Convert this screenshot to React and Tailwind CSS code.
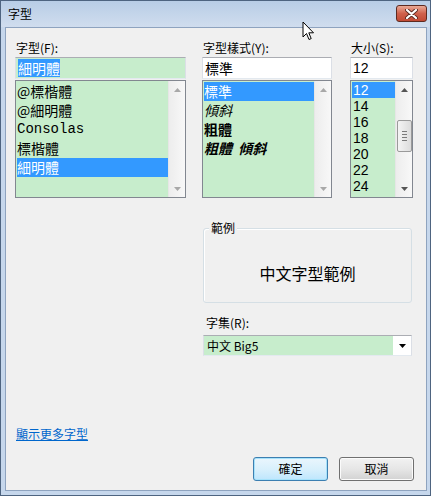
import React from 'react';

const fonts = ['@標楷體', '@細明體', 'Consolas', '標楷體', '細明體'];
const styles = [
  { label: '標準', cls: '' },
  { label: '傾斜', cls: 'italic' },
  { label: '粗體', cls: 'font-bold' },
  { label: '粗體  傾斜', cls: 'font-bold italic' },
];
const sizes = ['12', '14', '16', '18', '20', '22', '24'];

const Arrow = ({ down, color = '#a8a8a8' }) => (
  <svg width="7" height="4" viewBox="0 0 7 4">
    <path d={down ? 'M0 0 L7 0 L3.5 4Z' : 'M0 4 L3.5 0 L7 4Z'} fill={color} />
  </svg>
);

const ScrollBar = ({ thumb, color }) => (
  <div className="w-[17px] h-full flex flex-col bg-gradient-to-r from-[#ededed] to-[#f8f8f8] border-l border-[#e6e6e6]">
    <div className="h-[17px] flex items-center justify-center">
      <Arrow color={color} />
    </div>
    <div className="flex-1 flex flex-col items-center">
      {thumb && (
        <div className="mt-[22px] w-[15px] h-[32px] rounded-[2px] border border-[#9a9a9a] bg-gradient-to-r from-[#f4f4f4] to-[#dcdcdc] flex flex-col items-center justify-center gap-[2px]">
          <div className="w-[5px] h-px bg-[#7a7a7a]" />
          <div className="w-[5px] h-px bg-[#7a7a7a]" />
          <div className="w-[5px] h-px bg-[#7a7a7a]" />
          <div className="w-[5px] h-px bg-[#7a7a7a]" />
        </div>
      )}
    </div>
    <div className="h-[17px] flex items-center justify-center">
      <Arrow down color={color} />
    </div>
  </div>
);

const Label = ({ children }) => (
  <div className="h-[16px] leading-[16px] text-[12px] pl-[1px] text-black">{children}</div>
);

const Edit = ({ children, green }) => (
  <div
    className={`mt-[1px] h-[22px] border border-[#abadb3] border-b-[#e3e9ef] border-x-[#dbdfe6] flex items-center pl-[2px] text-[14px] leading-[18px] ${
      green ? 'bg-[#c7edcc]' : 'bg-white'
    }`}
  >
    {children}
  </div>
);

export default function App() {
  return (
    <div className="w-[431px] h-[496px] relative flex flex-col border border-[#4e6480] bg-[#c6d7ec] font-['Noto_Sans_CJK_TC','Noto_Sans',sans-serif] text-black select-none overflow-hidden">
      {/* title bar */}
      <div className="h-[26px] flex items-start justify-between pl-[7px] pr-[3px] bg-gradient-to-b from-[#b8cde6] to-[#d0ddee]">
        <span className="mt-[5px] text-[12px] leading-[16px]">字型</span>
        <div className="mt-[4px] w-[31px] h-[17px] rounded-[3px] border border-[#5e2a20] bg-gradient-to-b from-[#e9a996] via-[#d0614c] to-[#c14a34] flex items-center justify-center">
          <svg width="13" height="10" viewBox="0 0 13 10">
            <path d="M2 1 L11 9 M11 1 L2 9" stroke="#5a2a22" strokeWidth="4" strokeLinecap="round" />
            <path d="M2 1 L11 9 M11 1 L2 9" stroke="#ffffff" strokeWidth="2.2" strokeLinecap="round" />
          </svg>
        </div>
      </div>

      {/* client area */}
      <div className="flex-1 ml-[4px] mr-[3px] mb-[4px] border border-[#8ea3bf] bg-[#f0f0f0] flex flex-col pt-[12px]">
        <div className="flex pl-[9px] gap-[16px]">
          {/* font */}
          <div className="w-[171px] flex flex-col">
            <Label>字型(F):</Label>
            <Edit green>
              <span className="bg-[#3399ff] text-white">細明體</span>
            </Edit>
            <div className="mt-[1px] h-[118px] border border-[#828790] bg-[#c7edcc] flex">
              <div className="flex-1 pt-[1px] pl-[1px] flex flex-col">
                {fonts.map((f, i) => (
                  <div
                    key={i}
                    className={`h-[19px] leading-[19px] text-[14px] ${
                      f === 'Consolas' ? "font-['Liberation_Mono',monospace] text-[13px]" : ''
                    } ${i === 4 ? 'bg-[#3399ff] text-white' : ''}`}
                  >
                    {f}
                  </div>
                ))}
              </div>
              <ScrollBar />
            </div>
          </div>

          {/* style */}
          <div className="w-[130px] flex flex-col">
            <Label>字型樣式(Y):</Label>
            <Edit>標準</Edit>
            <div className="mt-[1px] h-[118px] border border-[#828790] bg-[#c7edcc] flex">
              <div className="flex-1 pt-[1px] pl-[1px] flex flex-col">
                {styles.map((s, i) => (
                  <div
                    key={i}
                    className={`h-[19px] leading-[19px] text-[14px] whitespace-pre ${s.cls} ${
                      i === 0 ? 'bg-[#3399ff] text-white' : ''
                    }`}
                  >
                    {s.label}
                  </div>
                ))}
              </div>
              <ScrollBar />
            </div>
          </div>

          {/* size */}
          <div className="ml-[2px] w-[63px] flex flex-col">
            <Label>大小(S):</Label>
            <Edit>
              <span className="font-['Liberation_Sans',sans-serif] text-[14px]">12</span>
            </Edit>
            <div className="mt-[1px] h-[118px] border border-[#828790] bg-[#c7edcc] flex">
              <div className="flex-1 pt-[1px] pl-[1px] flex flex-col">
                {sizes.map((s, i) => (
                  <div
                    key={s}
                    className={`h-[16px] leading-[16px] text-[14px] pl-[1px] font-['Liberation_Sans',sans-serif] ${
                      i === 0 ? 'bg-[#3399ff] text-white' : ''
                    }`}
                  >
                    {s}
                  </div>
                ))}
              </div>
              <ScrollBar thumb color="#555555" />
            </div>
          </div>
        </div>

        {/* sample + charset */}
        <div className="ml-[197px] w-[209px] flex flex-col">
          <div className="mt-[30px] h-[75px] relative rounded-[3px] border border-[#d5dfe5] shadow-[inset_1px_1px_0_#ffffff] flex items-center justify-center pt-[14px]">
            <span className="absolute -top-[9px] left-[5px] px-[2px] bg-[#f0f0f0] text-[12px] leading-[16px]">範例</span>
            <span className="text-[16px] leading-[20px]">中文字型範例</span>
          </div>
          <div className="mt-[12px] h-[16px] leading-[16px] text-[12px] pl-[3px]">字集(R):</div>
          <div className="mt-[4px] h-[21px] border border-[#abadb3] border-b-[#e3e9ef] border-x-[#dbdfe6] flex bg-white">
            <div className="flex-1 bg-[#c7edcc] flex items-center pl-[3px] text-[12px] leading-[16px]">
              中文 Big5
            </div>
            <div className="w-[18px] flex items-center justify-center">
              <Arrow down color="#000000" />
            </div>
          </div>
        </div>

        {/* link */}
        <div className="mt-[68px] pl-[10px] h-[16px] leading-[16px]">
          <span className="text-[12px] text-[#0066cc] underline">顯示更多字型</span>
        </div>

        {/* buttons */}
        <div className="mt-[17px] flex justify-end pr-[12px] gap-[11px]">
          <button className="w-[75px] h-[24px] rounded-[3px] border border-[#3c7fb1] bg-gradient-to-b from-[#eaf6fd] via-[#d9f0fc] to-[#bee6fd] shadow-[inset_0_0_0_1px_#a6e2fb] text-[12px] leading-[16px]">
            確定
          </button>
          <button className="w-[75px] h-[24px] rounded-[3px] border border-[#707070] bg-gradient-to-b from-[#f2f2f2] via-[#e6e6e6] to-[#d2d2d2] shadow-[inset_0_0_0_1px_#fbfbfb] text-[12px] leading-[16px]">
            取消
          </button>
        </div>
      </div>

      {/* mouse cursor */}
      <svg className="absolute left-[301px] top-[20px]" width="13" height="21" viewBox="0 0 13 21">
        <path d="M1 1 L1 16 L4.5 12.5 L7 18.5 L9.2 17.6 L6.8 11.8 L11.5 11.8 Z" fill="#ffffff" stroke="#000000" strokeWidth="1" strokeLinejoin="round" />
      </svg>
    </div>
  );
}
